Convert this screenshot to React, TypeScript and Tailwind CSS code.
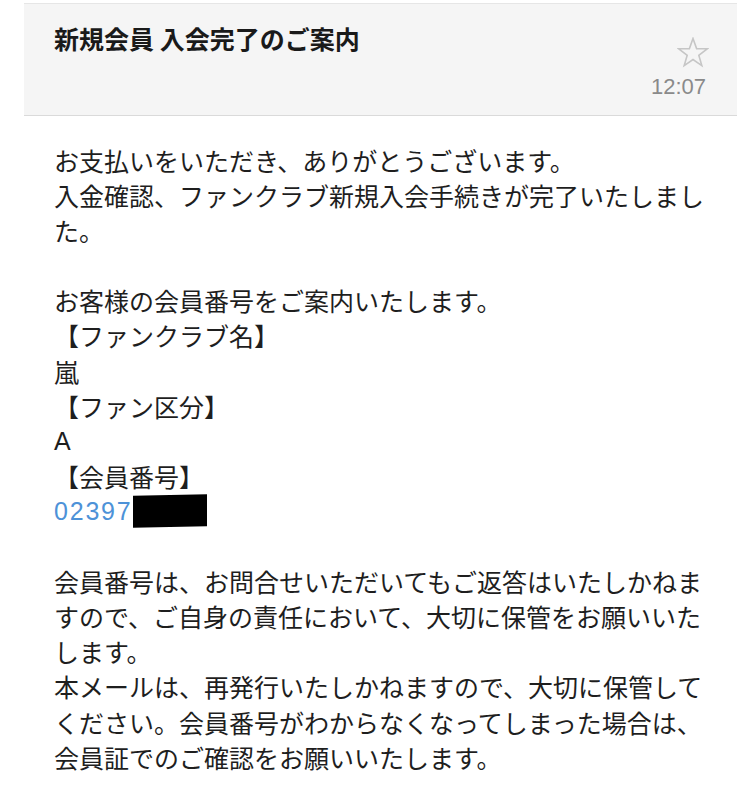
import React from 'react'

const lines1 = ['お支払いをいただき、ありがとうございます。', '入金確認、ファンクラブ新規入会手続きが完了いたしました。']

export default function App() {
    return (
        <div
            className="w-[750px] h-[796px] bg-white overflow-hidden"
            style={{ fontFamily: '"Noto Sans CJK JP", "Noto Sans", sans-serif' }}
        >
            {/* Header */}
            <header className="mt-[3px] ml-[24px] mr-[13px] h-[113px] bg-[#f5f5f5] border-t border-b border-t-[#e6e6e6] border-b-[#dadada] flex justify-between">
                <h1 className="pl-[30px] pt-[17px] text-[25px] leading-[34px] font-bold text-[#1a1a1a]">
                    新規会員 入会完了のご案内
                </h1>
                <div className="flex flex-col items-end pr-[31px] pt-[33px]">
                    <StarIcon />
                    <span
                        className="mt-[6px] text-[22px] leading-[25px] text-[#8a8a8a]"
                        style={{ fontFamily: '"Liberation Sans", sans-serif' }}
                    >
                        12:07
                    </span>
                </div>
            </header>

            {/* Body */}
            <main className="pl-[54px] pt-[27px] w-[708px] text-[25px] leading-[35.1px] text-[#1e1e1e]">
                {lines1.map((l) => (
                    <p key={l}>{l}</p>
                ))}
                <p className="h-[35.1px]" />
                <p>お客様の会員番号をご案内いたします。</p>
                <p>【ファンクラブ名】</p>
                <p>嵐</p>
                <p>【ファン区分】</p>
                <p style={{ fontFamily: '"Liberation Sans", sans-serif' }}>A</p>
                <p>【会員番号】</p>
                <p className="flex items-center">
                    <span
                        className="text-[#4d92d8] tracking-[1.8px]"
                        style={{ fontFamily: '"Liberation Sans", sans-serif' }}
                    >
                        02397
                    </span>
                    <span className="inline-block w-[74px] h-[32px] bg-black -skew-y-1" />
                </p>
                <p className="h-[35.1px]" />
                <p>会員番号は、お問合せいただいてもご返答はいたしかねますので、ご自身の責任において、大切に保管をお願いいたします。</p>
                <p>本メールは、再発行いたしかねますので、大切に保管してください。会員番号がわからなくなってしまった場合は、会員証でのご確認をお願いいたします。</p>
            </main>
        </div>
    )
}

function StarIcon() {
    return (
        <svg width="32" height="31" viewBox="0 0 32 31" fill="none" className="mr-[-3px]">
            <path
                d="M16 1.5 L19.6 11.6 L30.2 11.8 L21.8 18.3 L24.8 28.6 L16 22.5 L7.2 28.6 L10.2 18.3 L1.8 11.8 L12.4 11.6 Z"
                stroke="#c6c6c6"
                strokeWidth="1.6"
                strokeLinejoin="miter"
            />
        </svg>
    )
}
